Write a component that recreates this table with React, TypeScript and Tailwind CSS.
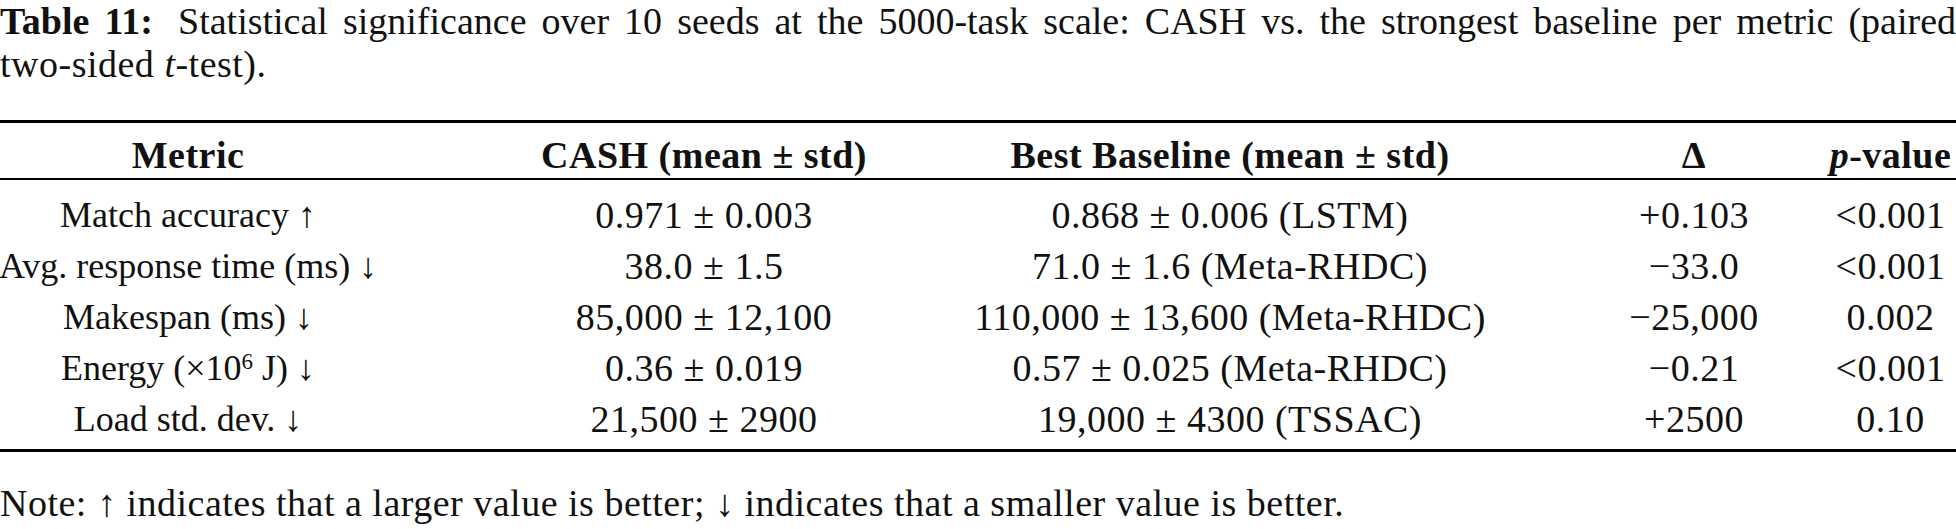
const rows = [
  ["Match accuracy ↑", "0.971 ± 0.003", "0.868 ± 0.006 (LSTM)", "+0.103", "<0.001"],
  ["Avg. response time (ms) ↓", "38.0 ± 1.5", "71.0 ± 1.6 (Meta-RHDC)", "−33.0", "<0.001"],
  ["Makespan (ms) ↓", "85,000 ± 12,100", "110,000 ± 13,600 (Meta-RHDC)", "−25,000", "0.002"],
  ["ENERGY", "0.36 ± 0.019", "0.57 ± 0.025 (Meta-RHDC)", "−0.21", "<0.001"],
  ["Load std. dev. ↓", "21,500 ± 2900", "19,000 ± 4300 (TSSAC)", "+2500", "0.10"],
];

// column centres follow the paper: 188 / 704 / 1230 / 1693 / 1890
const cols = "grid grid-cols-[376px_656px_531px_262px_131px]";
const cell = "flex justify-center whitespace-nowrap";

function MetricCell({ label }: { label: string }) {
  if (label === "ENERGY") {
    return (
      <span>
        Energy (×10<sup className="text-[23px]">6</sup> J) ↓
      </span>
    );
  }
  return <span>{label}</span>;
}

export default function App() {
  return (
    <div className="w-[1956px] h-[529px] bg-white text-[#111] font-['Liberation_Serif','Times_New_Roman',serif] text-[38px] tracking-[0.5px] overflow-hidden">
      <div className="leading-[43px]">
        <div className="text-justify [text-align-last:justify] tracking-normal">
          <span className="font-bold mr-[10px]">Table 11:</span> Statistical significance over 10 seeds at the
          5000-task scale: CASH vs. the strongest baseline per metric (paired
        </div>
        <div>
          two-sided <i>t</i>-test).
        </div>
      </div>

      <div className="mt-[34px] border-t-[3px] border-black">
        <div className={`${cols} pt-[10px] leading-[45px] font-bold`}>
          <div className={cell}>Metric</div>
          <div className={cell}>CASH (mean ± std)</div>
          <div className={`${cell} pr-[135px]`}>Best Baseline (mean ± std)</div>
          <div className={cell}>Δ</div>
          <div className={cell}>
            <i>p</i>-value
          </div>
        </div>

        <div className="border-t-[2px] border-b-[3px] border-black pt-[10px] pb-[4px]">
          {rows.map((r, i) => (
            <div key={i} className={`${cols} leading-[51px]`}>
              <div className={`${cell} text-[36px] tracking-normal`}>
                <MetricCell label={r[0]} />
              </div>
              <div className={cell}>{r[1]}</div>
              <div className={`${cell} pr-[135px]`}>{r[2]}</div>
              <div className={cell}>{r[3]}</div>
              <div className={cell}>{r[4]}</div>
            </div>
          ))}
        </div>
      </div>

      <div className="mt-[29px] leading-[45px] whitespace-nowrap">
        Note: ↑ indicates that a larger value is better; ↓ indicates that a smaller value is better.
      </div>
    </div>
  );
}
